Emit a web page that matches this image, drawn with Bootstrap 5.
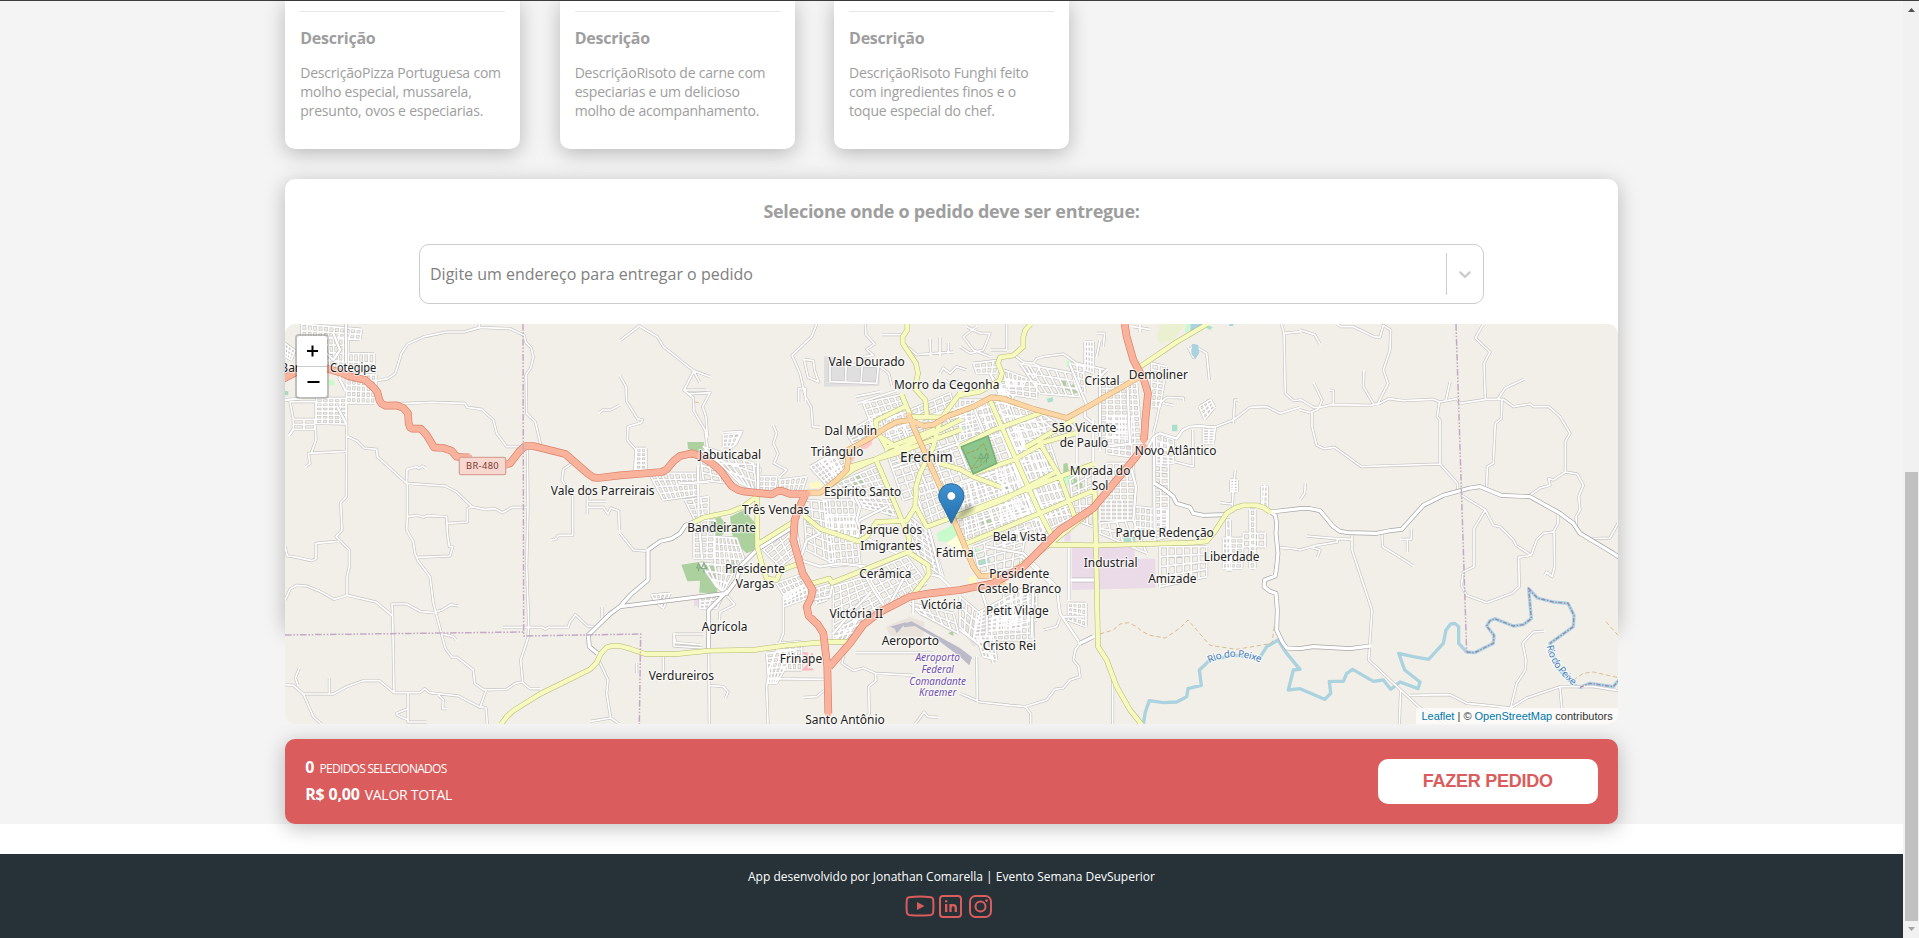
<!DOCTYPE html>
<html lang="pt-BR">
<head>
<meta charset="utf-8">
<meta name="viewport" content="width=device-width, initial-scale=1">
<title>DS Delivery</title>
<link href="https://cdn.jsdelivr.net/npm/bootstrap@5.3.0/dist/css/bootstrap.min.css" rel="stylesheet">
<style>
  body { font-family: "Open Sans", sans-serif; color: #9e9e9e; background: #fff; letter-spacing: -.015em; overflow: hidden; height: 938px; }
  .page-col { width: 1903px; height: 938px; border-top: 1px solid #3f3c40; }
  .orders { background: #f4f4f4; height: 823px; }
  .wrap { width: 1332.5px; margin: 0 auto; }
  .lift { box-shadow: 0 4px 20px rgba(0,0,0,.25); }
  .product { width: 235px; height: 148px; background: #fff; border-radius: 0 0 10px 10px; padding: 10px 15px 0; }
  .product .rule { border-top: 1px solid #e6e6e6; margin: 0 0 15px; }
  .product h3 { font-size: 16px; font-weight: 700; line-height: 22px; margin: 0 0 14px; }
  .product p { font-size: 14px; line-height: 19px; margin: 0; white-space: nowrap; letter-spacing: -.2px; }
  .product-row { gap: 39.4px; }
  .place { margin-top: 30px; height: 450px; background: #fff; border-radius: 10px; }
  .place h2 { font-size: 18px; font-weight: 700; line-height: 25px; padding-top: 20px; margin: 0 0 20px; letter-spacing: -.285px; }
  .address { width: 1065px; height: 60px; border: 1px solid #ccc; border-radius: 10px; color: gray; font-size: 16px; padding-left: 10px; letter-spacing: 0; }
  .address .sep { width: 1px; height: 42px; background: #ccc; }
  .address .chev { width: 36px; }
  .map-box { height: 400px; margin-top: 20px; border-radius: 10px; background: #f2efe9; overflow: hidden; position: relative; }
  .map-box > svg { display: block; }
  .map-box text { letter-spacing: 0; }
  .zoomer { top: 10px; left: 10px; width: 34px; border: 2px solid rgba(0,0,0,.2); border-radius: 4px; background-clip: padding-box; background-color: #fff; }
  .zoomer svg { display: block; }
  .zoomer svg + svg { border-top: 1px solid #ccc; }
  .credit { right: 0; bottom: 0; background: rgba(255,255,255,.7); font: 11px/16px "Liberation Sans", sans-serif; color: #333; padding: 0 5px; letter-spacing: 0; }
  .credit a { color: #0078a8; text-decoration: none; }
  .summary { margin-top: 110px; height: 85px; border-radius: 10px; background: #da5c5c; color: #fff; padding: 0 20px; }
  .summary b { font-size: 16px; letter-spacing: -.24px; }
  .summary .l1 { font-size: 12px; line-height: 26px; letter-spacing: -.72px; padding-top: 1px; }
  .summary .l2 { font-size: 14px; line-height: 24px; }
  .summary .l1 b { margin-right: 3px; }
  .summary .l2 b { margin-right: 1.5px; letter-spacing: -.2px; }
  .order-btn { width: 220px; height: 45px; border-radius: 10px; background: #fff; color: #da5c5c; font: bold 18px/45px "Liberation Sans", sans-serif; padding: 0 0 2px; border: 0; letter-spacing: -.015em; }
  .foot { margin-top: 30px; height: 84px; background: #263238; color: #fff; font-size: 12px; padding-top: 14px; letter-spacing: 0; }
  .social { margin: 8px 3px 0 0; }
  .bar { width: 16px; height: 938px; background: #f1f1f1; border-top: 1px solid #3f3c40; padding-left: 2px; }
  .bar .thumb { width: 13px; height: 449px; margin-top: 456px; background: #c1c1c1; }
</style>
</head>
<body class="d-flex">
<div class="page-col flex-shrink-0">
  <main class="orders">
    <div class="wrap">
      <div class="d-flex product-row">
        <article class="product lift"><div class="rule"></div><h3>Descrição</h3><p>DescriçãoPizza Portuguesa com<br>molho especial, mussarela,<br>presunto, ovos e especiarias.</p></article>
        <article class="product lift"><div class="rule"></div><h3>Descrição</h3><p>DescriçãoRisoto de carne com<br>especiarias e um delicioso<br>molho de acompanhamento.</p></article>
        <article class="product lift"><div class="rule"></div><h3>Descrição</h3><p>DescriçãoRisoto Funghi feito<br>com ingredientes finos e o<br>toque especial do chef.</p></article>
      </div>
      <section class="place lift">
        <h2 class="text-center">Selecione onde o pedido deve ser entregue:</h2>
        <div class="address d-flex align-items-center mx-auto">
          <span class="flex-grow-1">Digite um endereço para entregar o pedido</span>
          <span class="sep"></span>
          <span class="chev d-flex justify-content-center"><svg width="20" height="20" viewBox="0 0 20 20" fill="#ccc"><path d="M4.516 7.548c0.436-0.446 1.043-0.481 1.576 0l3.908 3.747 3.908-3.747c0.533-0.481 1.141-0.446 1.574 0 0.436 0.445 0.408 1.197 0 1.615-0.406 0.418-4.695 4.502-4.695 4.502-0.217 0.223-0.502 0.335-0.787 0.335s-0.57-0.112-0.789-0.335c0 0-4.287-4.084-4.695-4.502s-0.436-1.17 0-1.615z"/></svg></span>
        </div>
        <div class="map-box">
          <svg id="map" width="1333" height="400" viewBox="15 12 3999 1200"></svg>
          <div class="zoomer position-absolute">
            <svg width="30" height="30" viewBox="0 0 30 30" stroke="#000" stroke-width="2"><path d="M10 15h11M15.500 9.500v11"/></svg>
            <svg width="30" height="31" viewBox="0 0 30 30" stroke="#000" stroke-width="2"><path d="M10.500 15h12"/></svg>
          </div>
          <div class="credit position-absolute"><a href="#">Leaflet</a> | © <a href="#">OpenStreetMap</a> contributors</div>
        </div>
      </section>
      <section class="summary lift d-flex align-items-center justify-content-between">
        <div class="pb-1"><div class="l1"><b>0</b> PEDIDOS SELECIONADOS</div><div class="l2"><b>R$ 0,00</b> <span>VALOR TOTAL</span></div></div>
        <button class="order-btn">FAZER PEDIDO</button>
      </section>
    </div>
  </main>
  <footer class="foot text-center">
    <div>App desenvolvido por Jonathan Comarella | Evento Semana DevSuperior</div>
    <div class="social d-flex justify-content-center">
      <svg width="92" height="24" viewBox="0 0 92 24" fill="none" stroke="#da5c5c" stroke-width="2">
        <path d="M5 3.200Q16 1.800 27 3.200Q29 3.600 29.200 6Q29.800 12 29.200 18Q29 20.500 27 20.900Q16 22.200 5 20.900Q3 20.500 2.800 18Q2.200 12 2.800 6Q3 3.600 5 3.200Z"/>
        <path d="M13 8l7.500 4-7.500 4z" fill="#da5c5c" stroke="none"/>
        <rect x="36" y="2" width="21" height="21" rx="3"/><path d="M42.200 10v8M46.500 18v-8M46.500 13.500q.4-2.300 2.800-2.300 2.500 0 2.500 2.800v4M42.200 6.300v2" stroke-width="2.300"/>
        <rect x="66" y="2" width="21" height="21" rx="5.500"/><circle cx="76.500" cy="12.500" r="5"/><circle cx="82.600" cy="6.600" r="1.300" fill="#da5c5c" stroke="none"/>
      </svg>
    </div>
  </footer>
</div>
<aside class="bar flex-shrink-0">
  <svg class="d-block" width="13" height="15" viewBox="0 0 13 15"><path d="M3 11l3.500-4 3.500 4z" fill="#505050"/></svg>
  <div class="thumb"></div>
  <svg class="d-block" width="13" height="16" viewBox="0 0 13 16"><path d="M3 6l3.500 4L10 6z" fill="#a3a3a3"/></svg>
</aside>

<script>
// City map: each sheet is a quarter of the area, 1020 units apart, 3 units per pixel.
const map = document.getElementById('map');
const out = { area: '', over: '', text: '' };
const kinds = {
  s: ['#c6c4c2', 9, '#fff', 5], m: ['#bdbbb9', 10, '#fff', 7], w: ['#a5a5a5', 14, '#fff', 10],
  y: ['#b4b872', 16, '#f7fabf', 13], o: ['#cf9d60', 17, '#fcd6a4', 14], r: ['#dc7f66', 23, '#f9b29c', 19]
};
const order = 'smwyor';
const lines = {};
function road(kind, sheet, d) {
  d.split('|').forEach(p => {
    const n = p.trim().split(/[ ,]+/).map(Number);
    let s = 'M';
    for (let i = 0; i < n.length; i += 2) s += (i ? 'L' : '') + (n[i] + sheet * 1020) + ' ' + n[i + 1];
    lines[kind] = (lines[kind] || '') + s;
  });
}
// Street block between four corners, with a columns and b rows of streets.
function grid(sheet, c, a, b, kind = 's') {
  const L = (p, q, t) => [p[0] + (q[0] - p[0]) * t, p[1] + (q[1] - p[1]) * t];
  const [A, B, C, D] = [[c[0], c[1]], [c[2], c[3]], [c[4], c[5]], [c[6], c[7]]];
  for (let i = 0; i <= a; i++) road(kind, sheet, [...L(A, B, i / a), ...L(D, C, i / a)].join(' '));
  for (let i = 0; i <= b; i++) road(kind, sheet, [...L(A, D, i / b), ...L(B, C, i / b)].join(' '));
}
function area(sheet, color, pts) { out.area += `<polygon transform="translate(${sheet * 1020})" fill="${color}" points="${pts}"/>`; }
function label(sheet, x, y, t, w, size = 36, extra = '') {
  out.text += `<text x="${x + sheet * 1020}" y="${y + 1}" font-size="${size}" ${w ? `textLength="${w}" lengthAdjust="spacingAndGlyphs"` : ''} ${extra}>${t}</text>`;
}

// --- land use
area(0, '#c8facc', '145,180 158,178 166,194 148,198'); area(0, '#a8dcc0', '15,212 25,214 25,226 15,226');
area(1, '#add19e', '202,366 252,366 250,392 236,400 204,386'); area(1, '#add19e', '330,590 372,570 406,610 405,690 380,700 340,665');
area(1, '#add19e', '270,600 300,590 325,620 300,654 284,650'); area(1, '#add19e', '184,734 250,724 268,738 292,738 292,820 238,818 240,782 202,784');
area(1, '#add19e', '340,718 352,716 352,745 330,778 330,745'); area(1, '#e0dfdf', '612,108 648,112 650,134 780,136 778,198 612,200');
area(1, '#add19e', '700,474 716,466 732,484 730,504 702,498'); area(1, '#ffc8c4', '722,374 758,358 756,372 740,386 722,388');
area(1, '#ffc8c4', '690,408 706,412 700,424 690,422'); area(1, '#c8facc', '950,640 1000,612 1020,640 985,666 956,664');
area(1, '#fdfac3', '566,490 600,484 606,500 575,506'); area(1, '#e9dce6', '222,836 240,836 240,860 222,858');
area(1, '#e9e3dc', '798,920 870,890 914,906 910,950 870,950 810,948'); area(1, '#bcbac8', '850,912 874,904 1020,984 1056,1012 1048,1036 1020,1010 940,950 884,918 852,922');
area(1, '#bcbac8', '810,920 860,906 830,940 824,926'); area(1, '#add19e', '984,940 1000,932 1000,948'); area(1, '#ffffdc', '980,670 1020,640 1060,670 1030,700');
area(1, '#add19e', '800,574 820,574 812,590 802,586');
area(2, '#8cc68c', '4,380 84,348 110,430 40,462'); area(2, '#add19e', '300,182 318,184 320,210 308,218'); area(2, '#add19e', '318,208 340,192 362,214 340,222');
area(2, '#c8facc', '8,310 30,306 34,332 12,338'); area(2, '#c8facc', '320,122 336,124 336,140 320,140'); area(2, '#aadfcb', '260,236 278,232 280,244 264,248');
area(2, '#add19e', '62,596 98,588 106,620 68,630'); area(2, '#86b18d', '122,498 142,494 144,508 128,514'); area(2, '#add19e', '310,432 322,428 328,462 368,492 366,510 344,498 310,474');
area(2, '#c8facc', '300,472 338,464 342,486 316,500'); area(2, '#aadfcb', '636,314 652,314 652,334 636,334'); area(2, '#c8facc', '470,568 484,568 484,580 470,580');
area(2, '#ebdbe8', '336,682 524,680 524,716 586,716 586,804 336,810'); area(2, '#ebdbe8', '314,632 332,630 332,664 314,664'); area(2, '#ebdbe8', '496,380 516,378 516,410 496,412');
area(2, '#aadfcb', '46,716 84,706 90,726 56,740'); area(2, '#c8facc', '32,692 58,684 62,702 36,712'); area(2, '#aadfcb', '492,650 526,646 526,666 492,666');
area(2, '#ebf0d0', '600,12 676,12 640,62 596,70 590,50'); area(2, '#c8facc', '678,12 692,12 684,40 674,34'); area(2, '#aad3df', '692,12 734,12 706,34 690,36');
area(2, '#aad3df', '808,12 822,12 818,18 808,18'); area(2, '#aadfcb', '742,14 758,22 750,30 738,22');
area(2, '#fdfac3', '25,772 48,768 46,796 30,796'); area(2, '#e6e3df', '20,900 70,880 84,960 40,980 14,940'); area(2, '#e9e6e2', '0,590 50,560 60,620 0,640');

// --- western sheet
road('s', 0, '598,12 598,24 551,36 500,36 432,50 383,72 364,100 352,142 344,162 324,176 288,182 288,200 | 551,36 598,22 690,26 732,46 738,68 754,84 760,112 752,144 738,164 740,280 766,306 782,374 | 300,252 380,250 455,247 554,250 562,262 605,268 640,300 650,340 680,380 736,380 | 958,278 968,270 992,270 1020,255');
road('s', 0, '198,12 200,340 199,530 182,548 186,630 168,650 208,690 208,740 201,770 201,826 | 199,348 230,362 252,384 290,388 292,410 380,490 381,448 410,440 416,446 428,438 436,444 | 380,490 495,498 530,516 575,560 562,566 562,606 502,610 | 575,560 612,568 645,566 668,578 696,562 738,562 | 382,490 382,590 412,586 430,592 440,587 500,590 502,640 508,680 518,680 510,708 414,712 | 382,590 380,630 400,666 405,700 415,724 450,770 460,850 484,940 496,985 516,1012 532,1012 580,1050 584,1090 612,1110 680,1108 706,1090 726,1086 750,1106 780,1106 | 742,380 744,560 740,740 746,910 744,954 722,1020 728,1086');
road('s', 0, '197,394 85,400 90,430 78,440 | 94,398 108,360 106,320 | 174,664 108,670 108,716 96,722 40,710 22,708 15,680 | 15,840 30,808 50,796 80,798 120,814 162,838 202,826 288,846 338,888 | 338,888 336,852 380,852 420,874 460,878 486,870 512,854 536,858 | 338,888 342,1118 | 15,1094 40,1096 70,1122 160,1122 200,1100 250,1082 298,1082 342,1118 420,1118 434,1106 448,1118 536,1128 600,1162 618,1112 | 604,1160 618,1164 622,1212 | 70,1122 100,1190 124,1212 | 148,1122 148,1074 | 54,1096 46,1074 58,1044 | 384,1118 384,1206 440,1206 | 384,1166 350,1180 352,1186 384,1200 | 476,1126 490,1140 488,1166 500,1166 | 486,942 520,950 528,960');
road('s', 0, '668,922 786,922 796,928 806,922 864,922 870,906 886,884 922,918 944,920 | 966,862 966,894 | 876,430 850,448 846,480 878,530 878,646 836,646 826,658 814,660 | 922,500 922,584 | 922,544 980,544 | 922,562 970,562 984,582 992,564 1016,572 1018,630 | 956,1020 984,1080 980,1120 992,1194 932,1204 | 992,1194 1018,1212');
grid(0, [65,12,245,28,240,58,65,52], 11, 2); grid(0, [100,52,205,52,202,150,110,140], 7, 4); grid(0, [205,100,282,102,282,158,205,150], 5, 2); grid(0, [200,160,288,165,285,250,200,248], 6, 5);
grid(0, [110,235,198,235,198,312,108,310], 5, 6); grid(0, [30,245,108,245,108,298,40,298], 1, 1); grid(0, [40,298,104,298,104,328,40,328], 2, 2); grid(0, [15,70,45,92,34,120,15,110], 3, 3);
road('m', 0, '198,12 198,130 178,176 196,210 | 100,60 160,120 180,90 160,40 | 15,240 60,236 | 172,260 196,306 | 28,345 40,328');
road('w', 0, '1020,860 990,882 925,945 928,980 952,1000');
road('r', 0, '0,182 60,150 120,140 190,160 205,168 256,180 280,202 292,216 298,240 304,250 316,257 350,256 370,264 384,280 386,310 390,322 396,326 422,326 440,345 462,382 490,384 514,392 530,410 550,412 568,412 | 660,440 690,430 720,392 736,378 760,378 856,402 925,462 940,472 955,474 1020,466 1145,456 1160,448 1180,424 1200,408 1236,400 1260,408 1290,426 1320,450 1355,498 1375,510 1390,514 1475,523 1496,512 1510,514 1530,522 1582,522');
road('y', 0, '664,1212 680,1190 700,1172 780,1122 930,1048 950,1028 962,1002 980,982 1000,977 1020,978 1050,986 1096,1002 1190,1002 1290,992 1420,990 1520,976 1640,966 1712,966');

// --- centre-west sheet
road('s', 1, '0,62 58,18 112,50 130,80 220,152 270,170 | 220,152 240,188 | 220,156 192,210 220,234 222,274 255,330 262,380 | 0,168 18,200 20,244 52,296 68,300 64,308 24,320 22,360 48,390 44,450 | 196,210 260,210 | 206,222 270,218 248,260 258,290 262,350 | 590,12 575,50 516,106 540,160 556,230 574,262 578,320 600,322 | 552,118 580,122 584,152 596,186 564,172 552,118 | 536,246 536,206 556,206 556,244 | 736,12 738,44 764,72 740,88 760,106 730,110 | 784,44 850,44');
road('s', 1, '864,82 890,104 1000,96 | 930,56 932,106 | 960,52 960,108 | 985,70 985,100 | 780,140 806,160 816,200 | 706,230 780,215 | 712,250 830,212 | 310,338 366,334 348,372 330,384 | 460,316 470,340 460,370 474,400 462,430 500,450 480,470 | 255,390 300,430 400,434 420,446 416,520 | 960,160 970,144 990,160 1010,140 1040,150 | 975,180 1000,200 1020,180');
road('s', 1, '0,640 40,690 84,694 | 266,990 268,1212 | 268,1096 310,1100 324,1116 316,1136 | 162,940 162,978 248,984 | 250,942 162,942 166,968 240,974 | 320,826 344,854 300,876 298,900 | 490,840 490,940 470,990 450,1040 440,1100 444,1212 | 446,1076 612,1078 | 550,1132 590,1130 612,1112 | 672,1000 666,1030 700,1052 730,1044 766,1060 768,1082 746,1100 748,1180 726,1212 | 706,998 940,998 | 766,1060 880,1066 | 886,1212 912,1176 924,1190 956,1192 | 130,1010 130,1060 | 50,1030 50,1060');
grid(1, [50,385,78,385,78,448,48,448], 2, 5); grid(1, [88,460,235,460,235,525,130,540], 8, 4); grid(1, [250,380,400,430,410,512,360,490], 5, 3); grid(1, [240,390,300,430,330,490,250,480], 3, 4);
grid(1, [195,540,265,530,265,600,225,600], 3, 4); grid(1, [222,605,285,600,280,715,222,715], 3, 7); grid(1, [285,650,350,655,380,740,285,735], 6, 4); grid(1, [240,730,350,738,310,816,290,800], 5, 3);
grid(1, [310,345,360,340,340,380,310,380], 3, 3); grid(1, [415,470,470,470,465,515,415,512], 3, 3); grid(1, [480,480,560,470,545,515,480,510], 5, 2); grid(1, [95,825,150,820,130,865,105,845], 4, 2); grid(1, [240,835,310,825,290,865,240,865], 4, 3);
grid(1, [440,1000,525,990,470,1090,446,1090], 4, 6); grid(1, [470,970,545,965,545,1050,490,1050], 4, 4); grid(1, [490,830,570,790,575,830,490,860], 7, 3); grid(1, [470,790,555,760,570,800,500,840], 6, 3);
grid(1, [550,540,620,545,640,730,560,690], 3, 6); grid(1, [610,540,700,540,720,730,630,740], 5, 9); grid(1, [620,590,720,590,715,650,620,640], 5, 3); grid(1, [570,440,640,400,670,460,620,495], 6, 5); grid(1, [600,425,690,390,690,440,650,470], 4, 3);
grid(1, [650,490,770,440,840,590,720,560], 7, 8); grid(1, [430,690,525,610,540,690,480,740], 4, 4); grid(1, [640,800,740,770,800,860,640,960], 5, 7); grid(1, [740,760,860,710,920,790,800,860], 6, 5); grid(1, [870,590,930,640,970,770,870,700], 4, 7);
grid(1, [575,810,640,790,620,840,590,850], 3, 3); grid(1, [640,930,760,880,700,960,640,960], 5, 3); grid(1, [730,250,840,225,870,290,760,330], 6, 4); grid(1, [680,340,780,280,790,340,700,370], 4, 4);
grid(1, [870,850,1000,880,1015,940,900,880], 5, 2); grid(1, [630,130,775,140,770,190,630,185], 3, 1); grid(1, [890,500,960,480,1000,580,920,620], 4, 5);
grid(1, [780,340,1150,220,1230,420,850,540], 15, 9); grid(1, [800,300,990,220,1010,280,800,350], 8, 3); grid(1, [1000,500,1170,440,1230,580,1020,650], 8, 6);
road('m', 1, '850,330 920,500 | 1060,260 1140,450 | 980,290 1040,440 | 820,440 1190,310 | 234,440 236,600 246,715 | 414,430 414,520 | 180,490 262,486 | 700,520 720,560 710,600 730,650 830,700 | 640,780 630,830 560,842 | 720,740 760,810 800,870 | 800,870 870,740 | 868,640 920,760 960,770 990,800 | 880,500 930,640 960,760 | 560,600 600,640 560,660 540,720 600,740 660,730 740,740 | 720,600 800,560 | 640,940 700,870 750,820 | 880,880 880,820');
road('w', 1, '0,860 320,820 350,780 360,740 410,690 520,620 | 84,694 84,780 30,826 0,860 | 84,690 120,664 155,656 180,640 196,616 225,605 | 266,990 266,870 320,815');
road('y', 1, '225,605 252,592 330,576 370,560 412,528 412,680 425,730 440,776 470,780 480,756 500,744 535,732 | 414,672 520,606 | 556,590 600,626 716,664 740,650 770,606 860,602 886,560 888,500 900,460 940,380 960,300 1020,220 | 578,790 628,776 636,788 870,694 | 870,700 900,720 925,736 926,764 880,824 | 770,424 820,540 866,650 870,694 | 630,496 700,448 960,330 1020,300 | 690,440 830,400 1020,330 | 846,226 876,300 | 770,330 768,302 850,262 | 770,330 800,384 | 780,350 860,400 | 800,384 940,330 | 862,12 862,30 848,50 848,70 888,130 894,160 884,205 916,240 920,284 | 870,290 960,292 | 890,565 920,620 1020,584 1420,432 | 960,430 1020,448 1060,470 1140,500');
road('o', 1, '560,518 600,518 650,480 680,450 684,420 | 684,420 684,390 740,360 800,322 830,306 870,300 910,318 940,314 980,290 1060,260 1114,232 1150,236 1244,268 1340,294 1400,262 1560,170 | 866,284 880,320 960,500 1060,740 1080,768 1120,766 1150,790');
road('r', 1, '556,524 536,566 524,600 520,660 548,760 578,810 572,836 560,860 566,888 594,914 610,940 622,1040 625,1180 | 628,1040 690,970 730,914 780,876 870,830 930,820 1020,810 1120,790 1210,740 1320,630 1420,564 1540,420 1572,380 | 1514,12 1520,50 1540,120 1572,180 1584,220 1576,300 1572,360');
road('s', 1, '860,292 870,312');

// --- centre-east sheet
road('s', 2, '20,20 60,40 90,40 70,90 30,100 0,80 | 140,12 140,90 | 92,90 140,90 | 50,20 10,50 40,90 90,110 | 160,104 190,126 220,130 230,116 250,110 310,102 350,130 440,150 | 220,130 240,140 220,175 200,140 | 410,40 434,40 430,80 | 420,60 410,110 | 520,20 568,28 | 540,16 540,38 | 684,80 700,112 690,90 700,76 740,100 748,180 | 964,12 972,40 1020,35 | 972,40 976,220 1000,242 1020,240');
road('s', 2, '580,340 590,300 600,250 620,232 670,234 670,244 | 612,250 640,256 | 764,322 820,300 870,262 920,260 960,280 1020,262 | 820,310 824,240 834,240 | 766,322 760,372 | 698,330 700,440 | 624,420 700,440 680,435 | 816,580 820,500 826,450 | 780,548 816,552 | 910,560 914,496 | 950,682 1000,686 1020,690');
road('s', 2, '0,1120 60,1146 150,1156 196,1160 260,1140 285,1108 310,1104 330,1080 360,1070 356,1040 340,1020 346,990 360,970 | 196,1160 212,1180 212,1212 | 52,1146 50,1010 | 458,1080 458,1212 | 0,930 40,960 90,1000 100,1030 | 250,930 290,920 300,895');
grid(2, [120,180,230,185,230,235,130,220], 5, 3); grid(2, [130,150,200,175,190,200,140,200], 5, 2); grid(2, [40,130,120,120,110,160,50,160], 4, 2); grid(2, [375,65,400,65,400,160,375,150], 3, 6); grid(2, [420,190,500,190,510,350,420,350], 4, 10);
grid(2, [500,190,530,190,545,370,505,370], 2, 11); grid(2, [440,290,515,290,515,410,440,400], 4, 7); grid(2, [575,130,620,140,600,260,575,260], 2, 7); grid(2, [718,260,752,238,764,262,734,298], 3, 3); grid(2, [730,320,765,322,760,370,730,370], 2, 6);
grid(2, [590,340,640,360,640,430,590,430], 3, 4); grid(2, [420,540,520,540,520,600,420,600], 6, 5); grid(2, [525,560,620,570,620,650,525,640], 6, 4); grid(2, [420,610,520,600,560,700,420,640], 4, 2); grid(2, [580,360,625,370,625,650,580,660], 2, 16);
grid(2, [440,430,520,430,525,540,440,540], 4, 6); grid(2, [330,480,400,430,400,620,345,600], 3, 6); grid(2, [180,130,340,160,360,230,240,220], 6, 3); grid(2, [330,130,370,140,375,220,350,210], 2, 4);
grid(2, [600,680,740,680,740,770,600,800], 6, 4); grid(2, [800,600,810,600,815,750,800,750], 1, 6); grid(2, [790,655,850,655,845,745,790,745], 3, 6); grid(2, [870,570,885,570,885,745,870,745], 1, 10); grid(2, [850,640,915,640,915,680,850,680], 3, 2);
grid(2, [905,500,922,500,922,560,905,560], 1, 4); grid(2, [812,480,832,480,832,515,812,515], 2, 4); grid(2, [325,850,378,850,378,920,325,900], 4, 4);
grid(2, [50,880,220,790,220,960,40,960], 10, 8); grid(2, [50,950,100,950,110,1020,70,1010], 4, 4); grid(2, [130,820,230,800,230,900,140,920], 4, 4); grid(2, [80,900,190,880,180,930,80,930], 7, 3);
grid(2, [90,160,140,270,160,230,110,190], 2, 4); grid(2, [90,240,240,280,340,590,240,640], 7, 11); grid(2, [110,440,180,420,280,640,130,680], 6, 8); grid(2, [160,420,260,390,340,580,230,600], 7, 8); grid(2, [0,500,120,460,220,600,20,660], 9, 6); grid(2, [0,240,90,240,130,340,0,370], 6, 5);
grid(2, [130,290,250,285,340,345,160,390], 6, 4); grid(2, [40,680,200,620,180,740,60,760], 5, 4); grid(2, [0,830,60,880,40,960,0,920], 3, 3);
road('m', 2, '420,150 420,390 | 330,134 378,250 374,290 400,310 | 512,440 528,500 520,600 | 320,300 350,330 350,430 | 410,180 440,150 | 80,680 190,700 250,760 290,800 300,880 360,970 | 326,680 326,840 | 336,780 408,780 | 186,710 240,760 270,790 | 60,800 80,860 80,940 | 502,190 510,370 | 220,790 215,950 | 400,300 400,500');
road('m', 2, '582,350 584,660 | 560,390 582,350 600,340 650,356 668,330 690,320 718,318 764,322 | 310,890 370,890 | 450,378 510,372');
road('w', 2, '584,490 610,506 640,530 650,550 690,562 700,580 730,586 798,584 | 932,576 1020,566 1050,566 1080,572 1100,596 1120,620 1140,634 1165,638 1250,640 1290,632 1325,628 1345,606 1390,556 1450,526 1530,504 1560,500 1624,526 1710,530 1800,580 1840,610 1860,640 1960,700 1990,720 | 932,576 946,586 950,610 948,640 954,700 950,740 946,768 914,780 912,800 930,814 948,820 952,870 950,930 966,964 980,984 1020,986 1060,980 1170,986 1230,978 | 360,970 400,950 | 408,780 336,780');
road('y', 2, '212,12 196,30 190,50 190,80 160,106 120,112 114,130 126,160 118,184 | 0,225 60,215 114,184 | 742,12 650,66 540,140 | 0,380 100,330 250,276 | 200,380 340,300 | 240,370 345,340 | 40,460 160,420 240,375 | 90,240 160,400 240,580 278,650 | 240,370 300,470 344,590 | 0,590 130,540 280,460 | 20,670 240,580 400,512 | 404,510 408,680 414,980 440,1020 470,1100 510,1170 544,1212 | 264,674 410,676 700,668 740,664 765,634 800,580 825,564 850,556 890,556 912,563 930,576 | 150,760 260,680 410,560');

// --- eastern sheet
road('s', 3, '0,30 44,44 60,72 | 112,12 122,20 160,20 222,50 240,52 250,16 272,30 270,90 250,150 264,190 232,254 | 0,238 40,262 60,262 96,254 212,256 240,250 266,236 310,242 400,238 420,246 470,236 480,250 560,238 610,238 640,260 690,252 700,260 746,260 780,290 810,340 796,364 796,456 | 0,270 30,278 56,266 66,240 42,190 | 100,254 100,212 90,210 | 192,154 190,200 222,254 | 36,280 36,320 50,376 72,386 104,382 184,440 420,432 420,300 412,290 418,246 | 420,432 472,490 474,514 | 438,240 450,186 | 550,12 526,54 570,96 552,130 556,238 | 594,236 616,204 672,178 | 606,240 604,296 586,310 580,430 562,440 560,500');
road('s', 3, '796,456 760,480 746,476 750,496 720,504 690,526 | 796,456 832,462 850,496 836,530 840,570 828,590 830,620 | 870,656 930,654 954,610 | 774,584 774,610 760,636 730,640 710,660 694,706 656,712 658,800 636,820 560,848 500,826 484,796 490,756 522,740 522,626 556,570 482,524 | 556,570 580,616 600,620 640,660 648,676 694,706 | 762,636 764,740 756,770 740,756 734,766 | 156,642 156,690 216,870 206,1020 300,1108 356,1160 440,1212 | 246,642 248,680 300,712 340,738 | 304,658 334,658 334,626 | 322,660 322,696 | 20,648 110,656 156,658 | 0,690 50,676 112,666 112,656 | 40,684 60,690 52,712 | 0,540 14,520 16,490 | 302,1110 298,1212 | 330,1126 450,1124 500,1150 560,1156 632,1164 650,1090 676,1050 678,1020 668,970 700,936 732,934 | 632,1164 680,1134 780,1100 880,1100 954,1112 | 780,1104 790,1212');

// --- water and boundaries
const water = 'M2590 1212L2596 1176 2608 1142 2650 1148 2690 1146 2720 1130 2724 1106 2764 1096 2758 1050 2790 1020 2860 1006 2940 1012 2960 980 2994 960 3020 1000 3060 1048 3040 1050 3025 1110 3060 1106L3134 1138 3152 1120 3148 1084 3190 1084 3200 1060 3218 1048 3280 1084 3310 1080 3332 1108 3360 1086 3414 1106 3420 1086 3374 1050 3356 1000 3400 1010 3446 1018 3490 970 3498 930 3512 912 3524 910 3536 920 3536 970 3560 996 3584 998 3640 970 3642 946 3620 918 3630 902 3644 896 3700 918 3730 914 3754 896 3746 806 3772 834 3820 846 3864 850 3882 886 3880 920 3810 970 3830 1040 3876 1092 3900 1102 3930 1090 4000 1100 4020 1076';
const river = `<path d="${water}" fill="none" stroke="#aad3df" stroke-width="10" stroke-linejoin="round"/>`;
const dash = 'fill="none" stroke="#c4a9c5" stroke-width="4.500" stroke-dasharray="20 5 5 5 5 5"';
out.over += `<polygon points="2736,72 2754,74 2758,98 2746,118 2734,102" fill="#aad3df"/><path d="M729 12L731 948 1082 942 1078 1212M15 945L731 936M3528 12L3560 996" ${dash}/>
<path d="M3560 996L3584 998 3640 970 3642 946 3620 918 3630 902 3644 896 3700 918 3730 914 3754 896 3746 806 3772 834 3820 846 3864 850 3882 886 3880 920 3810 970M3900 1102L3930 1090 4000 1100 4020 1076" fill="none" stroke="#9a86b3" stroke-width="4" stroke-dasharray="12 5 4 5"/>
<path d="M2460 942L2500 930 2520 912 2545 908 2570 920 2586 934 2610 946 2656 954 2700 924 2724 900 2790 976 2870 988 2976 970 2984 910M3880 1080L3910 1060 3940 1056 4020 1074M3978 905L4016 948M1244 246l12 2" fill="none" stroke="#d9bd90" stroke-width="3" stroke-dasharray="13 8"/>
<path d="M1568 1000h12v12h-12M1596 1000v12h-12M1568 1028h24l-20 20h28" fill="none" stroke="#ffb6be" stroke-width="7"/>
<polygon points="2044,380 2124,348 2150,430 2080,462" fill="#8cc68c" stroke="#7bb077" stroke-width="5"/>
<path d="M2060 400l30-10 20-20 18 40-30 30-24 6 20-26-18-14" fill="none" stroke="#a8974f" stroke-width="3" stroke-dasharray="10 5"/>
<path d="M2103 430v-12m-7-2l7-16 7 16zM2119 428v-12m-6-2l6-14 6 14zM1272 758v-10m-8-2l8-18 8 18zM1256 754v-8m-6-2l6-14 6 14z" fill="none" stroke="#73a577" stroke-width="3"/>`;

// --- place names
label(0, 150, 155, 'Cotegipe', 139, 36, 'text-anchor="start"'); label(0, 1, 155, 'Barão', 0, 36, 'text-anchor="start"');
label(0, 968, 524, 'Vale dos Parreirais', 311);
[[740,137,'Vale Dourado',229],[980,207,'Morro da Cegonha',316],[692,343,'Dal Molin',159],[651,407,'Triângulo',158],[330,416,'Jabuticabal',187],[728,528,'Espírito Santo',232],[467,580,'Três Vendas',202],[305,634,'Bandeirante',206],[812,641,'Parque dos',189],[812,688,'Imigrantes',183],[1004,711,'Fátima',113],[796,772,'Cerâmica',156],[405,758,'Presidente',180],[405,804,'Vargas',115],[709,893,'Victória II',161],[965,865,'Victória',124],[314,931,'Agrícola',137],[871,975,'Aeroporto',172],[543,1028,'Frinape',127],[184,1079,'Verdureiros',196],[675,1210,'Santo Antônio',239]].forEach(a => label(1, ...a));
label(1, 919, 425, 'Erechim', 158, 42);
[[595,176,'Demoliner',177],[426,193,'Cristal',105],[372,335,'São Vicente',194],[372,381,'de Paulo',145],[647,404,'Novo Atlântico',245],[420,463,'Morada do',182],[420,509,'Sol',50],[179,662,'Bela Vista',162],[614,650,'Parque Redenção',295],[452,741,'Industrial',161],[815,723,'Liberdade',167],[637,788,'Amizade',145],[178,772,'Presidente',180],[178,818,'Castelo Branco',251],[172,883,'Petit Vilage',188],[148,988,'Cristo Rei',160]].forEach(a => label(2, ...a));
[['Aeroporto',1021,133],['Federal',1057,97],['Comandante',1093,170],['Kraemer',1128,112]].forEach(a => label(1, 953, a[1], a[0], a[2], 30, 'font-style="italic" fill="#6f4fb0"'));

let svg = out.area;
for (const k of order) svg += `<path d="${lines[k]}" fill="none" stroke="${kinds[k][0]}" stroke-width="${kinds[k][1]}" stroke-linejoin="round"/><path d="${lines[k]}" fill="none" stroke="${kinds[k][2]}" stroke-width="${kinds[k][3]}" stroke-linejoin="round" stroke-linecap="round"/>`;
map.innerHTML = `<defs><path id="rio1" d="M2788 1030Q2860 992 2945 1030"/><path id="rio2" d="M3800 978Q3812 1050 3900 1112"/></defs>` + river + svg + out.over +
`<rect x="538" y="412" width="139" height="52" rx="5" fill="#f7d7d0" stroke="#d8a498" stroke-width="4"/>
<g font-family="Noto Sans, sans-serif" fill="#222" text-anchor="middle" stroke="#fff" stroke-opacity=".65" stroke-width="7" stroke-linejoin="round" paint-order="stroke">${out.text}
<g font-size="30" fill="#4a80b8" text-anchor="start"><text><textPath href="#rio1" textLength="158">Rio do Peixe</textPath></text><text><textPath href="#rio2" textLength="146">Rio do Peixe</textPath></text></g></g>
<text x="607" y="448" font-family="Noto Sans, sans-serif" font-size="28" fill="#7d3a2e" text-anchor="middle" textLength="98">BR-480</text>
<defs><linearGradient id="pin" x1="0" y1="0" x2="0" y2="1"><stop offset="0" stop-color="#3f92d2"/><stop offset="1" stop-color="#2370ad"/></linearGradient><filter id="soft"><feGaussianBlur stdDeviation="6"/></filter></defs>
<path d="M2016 608L2052 562Q2086 545 2080 568Q2056 594 2016 608Z" opacity=".3" filter="url(#soft)"/>
<path d="M2014 610L1985 553Q1976 540 1976 528A38 37 0 0 1 2052 528Q2052 540 2044 553Z" fill="url(#pin)" stroke="#2e6c97" stroke-width="3"/><circle cx="2014" cy="528" r="13" fill="#fff" stroke="#2e6c97" stroke-width="2"/>`;
</script>
<script src="https://cdn.jsdelivr.net/npm/bootstrap@5.3.0/dist/js/bootstrap.bundle.min.js"></script>
</body>
</html>
